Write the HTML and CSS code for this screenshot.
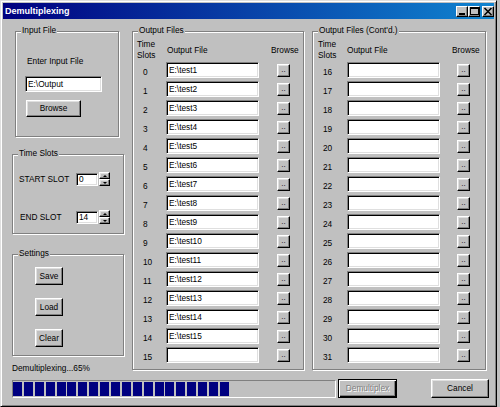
FILE: index.html
```html
<!DOCTYPE html>
<html>
<head>
<meta charset="utf-8">
<title>Demultiplexing</title>
<link rel="stylesheet" href="styles.css">
</head>
<body>
<div class="window">
  <div class="titlebar">
    <span class="title">Demultiplexing</span>
    <span class="tbtn"><svg width="10" height="9" viewBox="0 0 10 9"><rect x="2" y="6" width="6" height="2" fill="#000"/></svg></span>
    <span class="tbtn"><svg width="10" height="9" viewBox="0 0 10 9"><rect x="1.5" y="0.5" width="8" height="7" fill="none" stroke="#000"/><rect x="1" y="0" width="9" height="2" fill="#000"/></svg></span>
    <span class="tbtn tbtn-close"><svg width="10" height="9" viewBox="0 0 10 9"><path d="M1.5 1 L8.5 8 M8.5 1 L1.5 8" stroke="#000" stroke-width="1.6"/></svg></span>
  </div>

  <div class="main">
    <div class="leftcol">
      <div class="group g-input">
        <span class="legend">Input File</span>
        <div class="ig-label">Enter Input File</div>
        <div class="field ig-field">E:\Output</div>
        <div class="btn ig-browse">Browse</div>
      </div>

      <div class="group g-slots">
        <span class="legend">Time Slots</span>
        <div class="slot-row first">
          <span class="slot-label">START SLOT</span>
          <div class="field slot-field">0</div>
          <div class="spin"><div class="btn spin-btn"><i class="up"></i></div><div class="btn spin-btn"><i class="down"></i></div></div>
        </div>
        <div class="slot-row second">
          <span class="slot-label end">END SLOT</span>
          <div class="field slot-field">14</div>
          <div class="spin"><div class="btn spin-btn"><i class="up"></i></div><div class="btn spin-btn"><i class="down"></i></div></div>
        </div>
      </div>

      <div class="group g-settings">
        <span class="legend">Settings</span>
        <div class="btn set-btn first">Save</div>
        <div class="btn set-btn">Load</div>
        <div class="btn set-btn">Clear</div>
      </div>

      <div class="status">Demultiplexing...65%</div>
    </div>

    <div class="group g-out">
      <span class="legend">Output Files</span>
      <div class="ohead">
        <div class="oh-slots">Time<br>Slots</div>
        <div class="oh-file">Output File</div>
        <div class="oh-browse">Browse</div>
      </div>
      <div class="rows">
        <div class="row"><span class="num">0</span><div class="field ofield">E:\test1</div><div class="btn dots">..</div></div>
        <div class="row"><span class="num">1</span><div class="field ofield">E:\test2</div><div class="btn dots">..</div></div>
        <div class="row"><span class="num">2</span><div class="field ofield">E:\test3</div><div class="btn dots">..</div></div>
        <div class="row"><span class="num">3</span><div class="field ofield">E:\test4</div><div class="btn dots">..</div></div>
        <div class="row"><span class="num">4</span><div class="field ofield">E:\test5</div><div class="btn dots">..</div></div>
        <div class="row"><span class="num">5</span><div class="field ofield">E:\test6</div><div class="btn dots">..</div></div>
        <div class="row"><span class="num">6</span><div class="field ofield">E:\test7</div><div class="btn dots">..</div></div>
        <div class="row"><span class="num">7</span><div class="field ofield">E:\test8</div><div class="btn dots">..</div></div>
        <div class="row"><span class="num">8</span><div class="field ofield">E:\test9</div><div class="btn dots">..</div></div>
        <div class="row"><span class="num">9</span><div class="field ofield">E:\test10</div><div class="btn dots">..</div></div>
        <div class="row"><span class="num">10</span><div class="field ofield">E:\test11</div><div class="btn dots">..</div></div>
        <div class="row"><span class="num">11</span><div class="field ofield">E:\test12</div><div class="btn dots">..</div></div>
        <div class="row"><span class="num">12</span><div class="field ofield">E:\test13</div><div class="btn dots">..</div></div>
        <div class="row"><span class="num">13</span><div class="field ofield">E:\test14</div><div class="btn dots">..</div></div>
        <div class="row"><span class="num">14</span><div class="field ofield">E:\test15</div><div class="btn dots">..</div></div>
        <div class="row"><span class="num">15</span><div class="field ofield"></div><div class="btn dots">..</div></div>
      </div>
    </div>

    <div class="group g-out g-cont">
      <span class="legend">Output Files (Cont'd.)</span>
      <div class="ohead">
        <div class="oh-slots">Time<br>Slots</div>
        <div class="oh-file">Output File</div>
        <div class="oh-browse">Browse</div>
      </div>
      <div class="rows">
        <div class="row"><span class="num">16</span><div class="field ofield"></div><div class="btn dots">..</div></div>
        <div class="row"><span class="num">17</span><div class="field ofield"></div><div class="btn dots">..</div></div>
        <div class="row"><span class="num">18</span><div class="field ofield"></div><div class="btn dots">..</div></div>
        <div class="row"><span class="num">19</span><div class="field ofield"></div><div class="btn dots">..</div></div>
        <div class="row"><span class="num">20</span><div class="field ofield"></div><div class="btn dots">..</div></div>
        <div class="row"><span class="num">21</span><div class="field ofield"></div><div class="btn dots">..</div></div>
        <div class="row"><span class="num">22</span><div class="field ofield"></div><div class="btn dots">..</div></div>
        <div class="row"><span class="num">23</span><div class="field ofield"></div><div class="btn dots">..</div></div>
        <div class="row"><span class="num">24</span><div class="field ofield"></div><div class="btn dots">..</div></div>
        <div class="row"><span class="num">25</span><div class="field ofield"></div><div class="btn dots">..</div></div>
        <div class="row"><span class="num">26</span><div class="field ofield"></div><div class="btn dots">..</div></div>
        <div class="row"><span class="num">27</span><div class="field ofield"></div><div class="btn dots">..</div></div>
        <div class="row"><span class="num">28</span><div class="field ofield"></div><div class="btn dots">..</div></div>
        <div class="row"><span class="num">29</span><div class="field ofield"></div><div class="btn dots">..</div></div>
        <div class="row"><span class="num">30</span><div class="field ofield"></div><div class="btn dots">..</div></div>
        <div class="row"><span class="num">31</span><div class="field ofield"></div><div class="btn dots">..</div></div>
      </div>
    </div>
  </div>

  <div class="bottom">
    <div class="progress">
      <i></i><i></i><i></i><i></i><i></i><i></i><i></i><i></i><i></i><i></i>
      <i></i><i></i><i></i><i></i><i></i><i></i><i></i><i></i><i></i><i></i>
    </div>
    <div class="btn btn-default disabled">Demultiplex</div>
    <div class="btn btn-cancel">Cancel</div>
  </div>
</div>
</body>
</html>
```

FILE: styles.css
```css
* { box-sizing: border-box; }
html, body { margin: 0; padding: 0; background: #c0c0c0; }
body {
  width: 500px;
  height: 407px;
  overflow: hidden;
  font-family: "Liberation Sans", Arial, sans-serif;
  font-size: 8.3px;
  line-height: 11px;
  color: #000;
}

.window {
  width: 497px;
  height: 407px;
  border: 1px solid;
  border-color: #dfdfdf #000 #000 #dfdfdf;
  box-shadow: inset 1px 1px 0 #fff, inset -1px -1px 0 #808080;
  padding: 2px;
  background: #c0c0c0;
  display: flex;
  flex-direction: column;
}

/* title bar */
.titlebar {
  flex: none;
  height: 16px;
  background: linear-gradient(to right, #000080, #1084d0);
  display: flex;
  align-items: center;
  padding: 0 0 0 2px;
}
.title {
  flex: 1;
  color: #fff;
  font-weight: bold;
  font-size: 9px;
}
.tbtn {
  width: 12px;
  height: 11px;
  background: #c0c0c0;
  border: 1px solid;
  border-color: #fff #000 #000 #fff;
  box-shadow: inset -1px -1px 0 #808080;
  display: flex;
  align-items: center;
  justify-content: center;
}
.tbtn svg { display: block; }
.tbtn-close { margin-left: 2px; }

/* common controls */
.btn {
  background: #c0c0c0;
  border: 1px solid;
  border-color: #fff #000 #000 #fff;
  box-shadow: inset -1px -1px 0 #808080, inset 1px 1px 0 #dfdfdf;
  text-align: center;
}
.field {
  background: #fff;
  border: 1px solid;
  border-color: #808080 #fff #fff #808080;
  box-shadow: inset 1px 1px 0 #000, inset -1px -1px 0 #dfdfdf;
  white-space: nowrap;
  overflow: hidden;
}

.group {
  position: relative;
  border: 1px solid #808080;
  box-shadow: inset 1px 1px 0 #fff, 1px 1px 0 #fff;
}
.legend {
  position: absolute;
  top: -7px;
  left: 5px;
  padding: 0 1px;
  background: #c0c0c0;
  white-space: nowrap;
}

/* layout */
.main {
  flex: none;
  display: flex;
  align-items: flex-start;
  margin-top: 12px;
  padding-left: 9px;
}
.leftcol {
  width: 112px;
  display: flex;
  flex-direction: column;
}

/* input file group */
.g-input {
  margin-left: 3px;
  width: 104px;
  height: 106px;
}
.ig-label { margin: 24px 0 0 11px; }
.ig-field {
  margin: 9px 0 0 9px;
  width: 77px;
  height: 16px;
  padding-left: 2px;
  line-height: 14px;
}
.ig-browse {
  margin: 8px 0 0 10px;
  width: 55px;
  height: 17px;
  line-height: 15px;
}

/* time slots group */
.g-slots {
  margin-top: 17px;
  width: 112px;
  height: 80px;
}
.slot-row {
  display: flex;
  align-items: center;
  height: 14px;
}
.slot-row.first { margin-top: 17px; }
.slot-row.second { margin-top: 24px; }
.slot-label {
  width: 63px;
  padding-left: 6px;
}
.slot-label.end { padding-left: 7px; }
.slot-field {
  width: 22px;
  height: 13px;
  line-height: 11px;
  padding-left: 2px;
}
.spin {
  margin-left: 1px;
  width: 11px;
  height: 14px;
  display: flex;
  flex-direction: column;
}
.spin-btn {
  height: 7px;
  display: flex;
  align-items: center;
  justify-content: center;
}
.spin-btn i {
  display: block;
  width: 0;
  height: 0;
  border-left: 2.5px solid transparent;
  border-right: 2.5px solid transparent;
}
.spin-btn i.up { border-bottom: 2.5px solid #000; }
.spin-btn i.down { border-top: 2.5px solid #000; }

/* settings group */
.g-settings {
  margin-top: 20px;
  width: 112px;
  height: 102px;
}
.set-btn {
  margin: 13px 0 0 22px;
  width: 28px;
  height: 18px;
  line-height: 16px;
}
.set-btn.first { margin-top: 12px; }

.status {
  margin-top: 7px;
  white-space: nowrap;
}

/* output groups */
.g-out {
  margin-left: 8px;
  width: 172px;
  height: 339px;
}
.g-cont { width: 174px; }
.ohead {
  display: flex;
  align-items: center;
  margin-top: 7px;
  padding-left: 4px;
  height: 22px;
}
.g-cont .ohead { padding-left: 5px; }
.oh-slots { width: 30px; }
.g-cont .oh-slots { width: 29px; }
.oh-file { width: 104px; }
.g-cont .oh-file { width: 105px; }

.rows {
  margin-top: 1px;
  padding-left: 10px;
}
.row {
  display: flex;
  height: 16px;
  margin-bottom: 3px;
}
.num {
  width: 23px;
  align-self: flex-end;
}
.g-cont .num { width: 24px; }
.ofield {
  width: 93px;
  height: 16px;
  line-height: 14px;
  padding-left: 2px;
}
.dots {
  align-self: center;
  margin-left: 18px;
  width: 13px;
  height: 13px;
  font-size: 8px;
  line-height: 10px;
}
.g-cont .dots { margin-left: 17px; }

/* bottom row */
.bottom {
  flex: none;
  display: flex;
  align-items: flex-start;
  margin-top: 5px;
  padding-left: 9px;
}
.progress {
  margin-top: 1px;
  width: 324px;
  height: 18px;
  border: 1px solid;
  border-color: #808080 #fff #fff #808080;
  padding-top: 1px;
  display: flex;
  gap: 1.9px;
}
.progress i {
  display: block;
  width: 9px;
  height: 14px;
  background: #000080;
}
.btn-default {
  margin-left: 2px;
  width: 59px;
  height: 19px;
  line-height: 17px;
  border: 1px solid #000;
  box-shadow: inset 1px 1px 0 #fff, inset -1px -1px 0 #000, inset -2px -2px 0 #808080;
}
.disabled {
  color: #808080;
  text-shadow: 1px 1px 0 #fff;
}
.btn-cancel {
  margin-left: 34px;
  width: 58px;
  height: 19px;
  line-height: 17px;
}
```
